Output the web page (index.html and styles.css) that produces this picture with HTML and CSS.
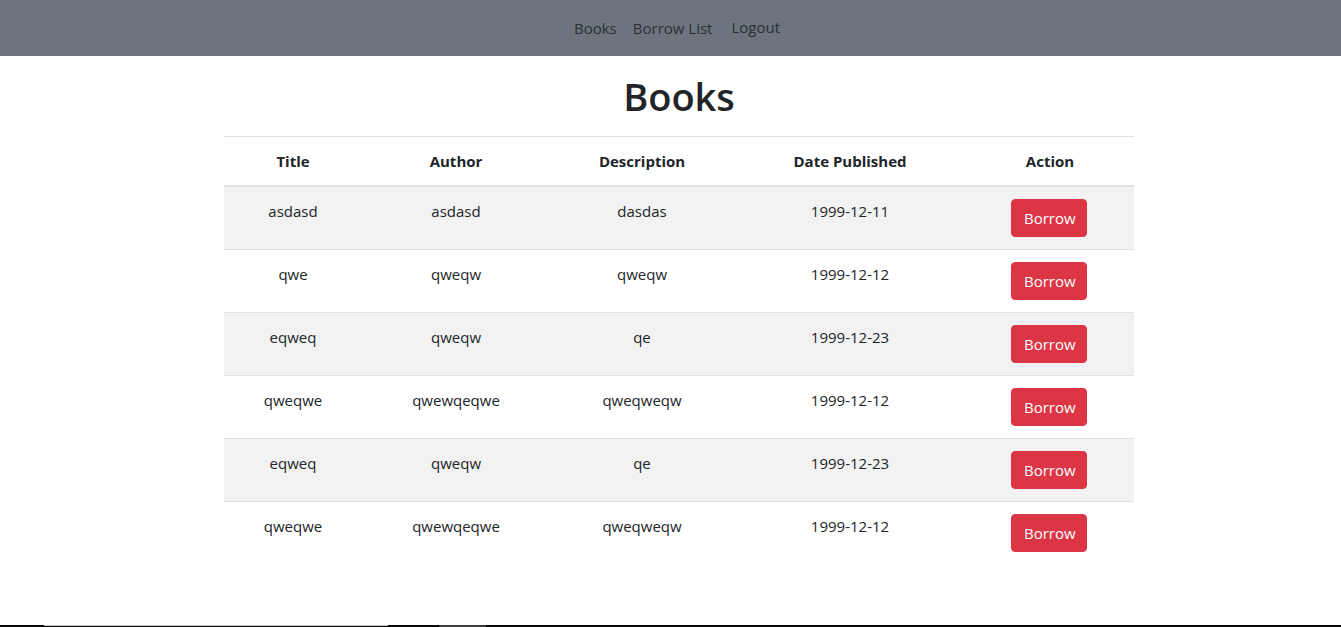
FILE: index.html
```html
<!DOCTYPE html>
<html lang="en">
<head>
<meta charset="utf-8">
<title>Books</title>
<link rel="stylesheet" href="styles.css">
</head>
<body>
<nav class="navbar">
  <a class="nav-link" href="#">Books</a>
  <a class="nav-link" href="#">Borrow List</a>
  <a class="nav-link logout" href="#">Logout</a>
</nav>
<main class="content">
  <h1 class="page-title">Books</h1>
  <table class="books">
    <colgroup>
      <col class="c-title"><col class="c-author"><col class="c-desc"><col class="c-date"><col class="c-action">
    </colgroup>
    <thead>
      <tr><th>Title</th><th>Author</th><th>Description</th><th>Date Published</th><th>Action</th></tr>
    </thead>
    <tbody>
      <tr><td>asdasd</td><td>asdasd</td><td>dasdas</td><td>1999-12-11</td><td><button class="btn">Borrow</button></td></tr>
      <tr><td>qwe</td><td>qweqw</td><td>qweqw</td><td>1999-12-12</td><td><button class="btn">Borrow</button></td></tr>
      <tr><td>eqweq</td><td>qweqw</td><td>qe</td><td>1999-12-23</td><td><button class="btn">Borrow</button></td></tr>
      <tr><td>qweqwe</td><td>qwewqeqwe</td><td>qweqweqw</td><td>1999-12-12</td><td><button class="btn">Borrow</button></td></tr>
      <tr><td>eqweq</td><td>qweqw</td><td>qe</td><td>1999-12-23</td><td><button class="btn">Borrow</button></td></tr>
      <tr><td>qweqwe</td><td>qwewqeqwe</td><td>qweqweqw</td><td>1999-12-12</td><td><button class="btn">Borrow</button></td></tr>
    </tbody>
  </table>
</main>
<div class="bottom-strip">
  <span class="seg seg-light"></span>
  <span class="seg seg-dark"></span>
</div>
</body>
</html>
```
FILE: styles.css
```css
html, body {
  margin: 0;
  padding: 0;
  background: #fff;
}
body {
  font-family: "Open Sans", "Noto Sans", sans-serif;
  font-size: 15px;
  line-height: 24px;
  color: #212529;
}
.navbar {
  height: 56px;
  background: #6c757d;
  display: flex;
  justify-content: center;
  align-items: center;
  padding-left: 13px;
  box-sizing: border-box;
}
.nav-link {
  color: #2b2f33;
  text-decoration: none;
  font-size: 15px;
  padding: 0 8px;
}
.nav-link.logout {
  margin-left: 3px;
  position: relative;
  top: -1px;
}
.content {
  width: 910px;
  margin-left: 224px;
}
.page-title {
  margin: 18px 0 16px;
  text-align: center;
  font-size: 38px;
  font-weight: 600;
  line-height: 1.2;
  color: #212529;
}
.books {
  width: 910px;
  border-collapse: collapse;
  table-layout: fixed;
}
.c-title { width: 138px; }
.c-author { width: 188px; }
.c-desc { width: 184px; }
.c-date { width: 232px; }
.c-action { width: 168px; }
.books th, .books td {
  text-align: center;
  vertical-align: top;
  padding: 12px;
  line-height: 24px;
  border-top: 1px solid #dee2e6;
}
.books th {
  font-weight: 700;
  border-bottom: 2px solid #dee2e6;
}
.books tbody tr:first-child td {
  border-top: 0;
}
.books tbody tr:nth-child(odd) {
  background: #f2f2f2;
}
.btn {
  font-family: inherit;
  font-size: 15px;
  line-height: 24px;
  color: #fff;
  background: #dc3545;
  border: 1px solid #dc3545;
  border-radius: 4px;
  padding: 6px 12px;
  height: 38px;
  width: 76px;
  margin-left: -2px;
  cursor: pointer;
}
.bottom-strip {
  position: fixed;
  left: 0;
  right: 0;
  bottom: 0;
  height: 2px;
  background: #0a0a0a;
}
.seg {
  position: absolute;
  top: 0;
  height: 2px;
}
.seg-light {
  left: 44px;
  width: 344px;
  background: #c4c4c4;
  height: 1px;
}
.seg-dark {
  left: 439px;
  width: 47px;
  background: #3a3a3a;
}
```
